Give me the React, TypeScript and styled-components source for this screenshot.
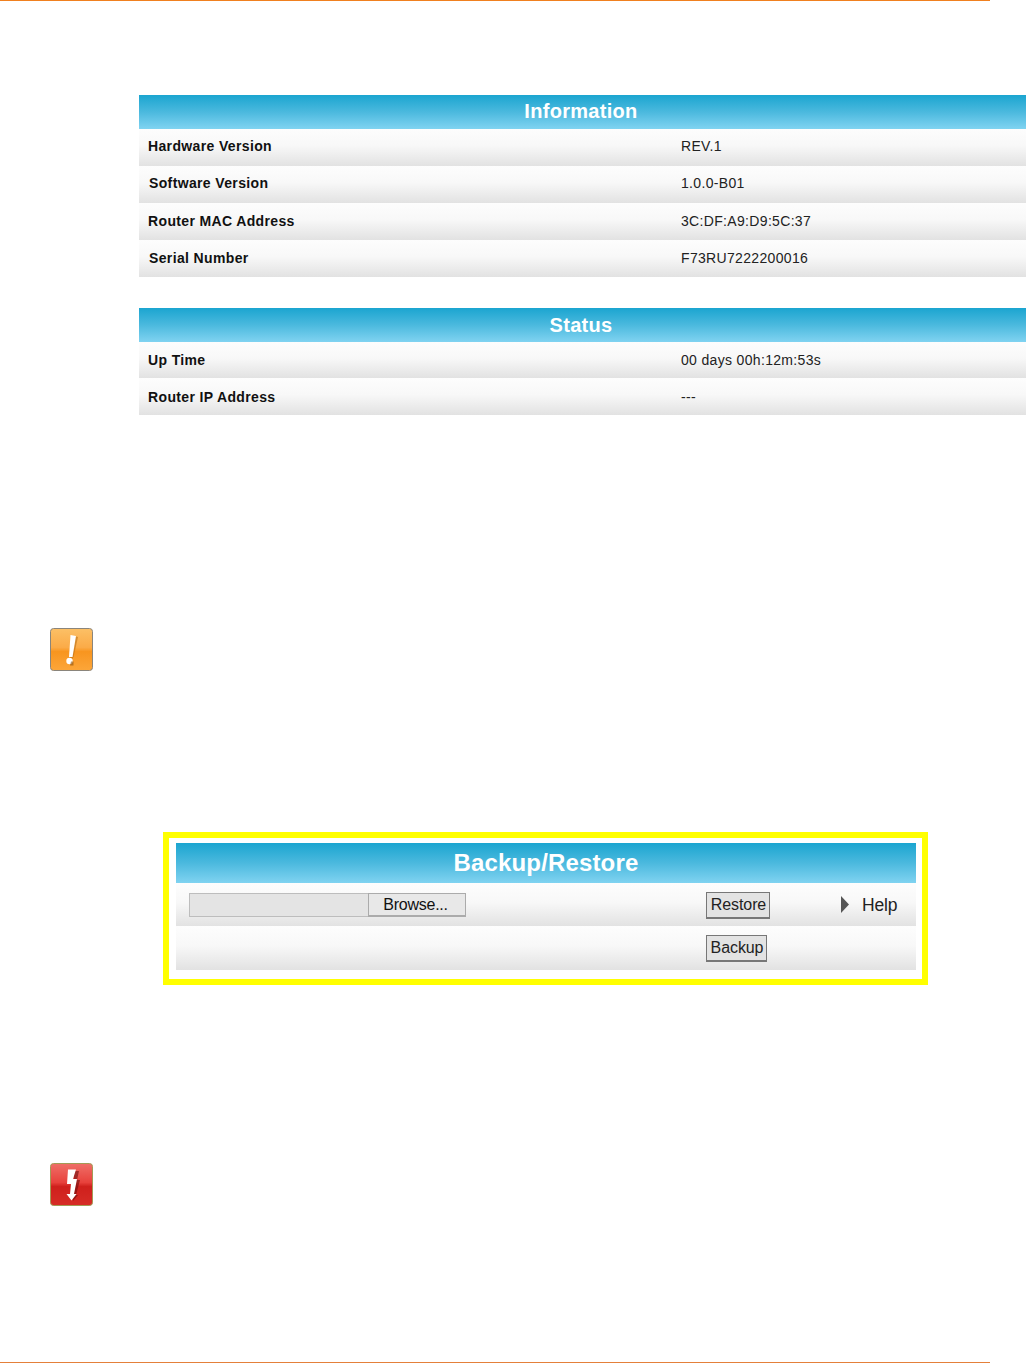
import React from "react";
import styled, { createGlobalStyle } from "styled-components";

const Global = createGlobalStyle`
  html, body { margin: 0; padding: 0; background: #fff; }
  body { font-family: "Liberation Sans", Arial, sans-serif; overflow: hidden; }
`;

const Page = styled.div`
  width: 1027px;
  height: 1363px;
  overflow: hidden;
  display: flex;
  flex-direction: column;
`;
const Rule = styled.div<{ $tone: string }>`
  width: 990px;
  height: 1px;
  background: ${(p) => p.$tone};
  flex: none;
`;
const InfoStack = styled.section`
  margin: 94px 0 0 139px;
  width: 887px;
  display: flex;
  flex-direction: column;
  gap: 31px;
`;
const Table = styled.div`
  display: flex;
  flex-direction: column;
`;
const Banner = styled.div<{ $large?: boolean; $low?: boolean }>`
  box-sizing: border-box;
  height: ${(p) => (p.$large ? 40 : 34)}px;
  line-height: ${(p) => (p.$large ? 40 : p.$low ? 34 : 32)}px;
  background: linear-gradient(180deg, #1ba5d0 0%, #4bb9de 50%, #80d3f1 100%);
  color: #fff;
  font-weight: 700;
  font-size: ${(p) => (p.$large ? 24 : 20)}px;
  letter-spacing: ${(p) => (p.$large ? 0.15 : 0.3)}px;
  text-align: center;
  padding-right: ${(p) => (p.$large ? 0 : 3)}px;
`;
const rowBg = `linear-gradient(180deg, #fdfdfd 0%, #f8f8f8 45%, #e2e2e2 100%)`;
const Row = styled.div<{ $h: number; $lift?: number }>`
  box-sizing: border-box;
  height: ${(p) => p.$h}px;
  padding-bottom: ${(p) => (p.$lift ?? 0) * 2}px;
  display: grid;
  grid-template-columns: 542px 1fr;
  align-items: center;
  background: ${rowBg};
  font-size: 14px;
  color: #111;
`;
const Label = styled.div<{ $nudge?: boolean }>`
  font-weight: 700;
  padding-left: ${(p) => (p.$nudge ? 10 : 9)}px;
  letter-spacing: 0.36px;
  color: #111;
`;
const Value = styled.div`
  color: #222;
  letter-spacing: 0.33px;
`;
const AlertIcon = styled.svg<{ $top: number }>`
  display: block;
  flex: none;
  width: 44px;
  height: 44px;
  margin: ${(p) => p.$top}px 0 0 50px;
  filter: blur(0.35px);
`;
const Frame = styled.section`
  margin: 160px 0 0 163px;
  width: 765px;
  height: 153px;
  box-sizing: border-box;
  border: 6px solid #ffff00;
  padding: 5px 6px 9px 7px;
  display: flex;
  flex-direction: column;
`;
const BackupRow = styled.div<{ $h: number }>`
  height: ${(p) => p.$h}px;
  background: ${rowBg};
  display: grid;
  grid-template-columns: 530px 135px 1fr;
  align-items: center;
  font-size: 16px;
  color: #222;
`;
const FilePicker = styled.div`
  display: flex;
  margin-left: 13px;
  height: 24px;
`;
const FileField = styled.div`
  width: 179px;
  box-sizing: border-box;
  background: #e4e4e4;
  border: 1px solid #bdbdbd;
  border-right: 0;
`;
const BrowseButton = styled.button`
  width: 98px;
  height: 24px;
  padding: 2px 3px 0 0;
  box-sizing: border-box;
  background: #e8e8e8;
  border: 1px solid #ababab;
  border-bottom-width: 2px;
  font: 16px "Liberation Sans", Arial, sans-serif;
  letter-spacing: -0.25px;
  color: #111;
  text-align: center;
`;
const ActionButton = styled.button<{ $w: number }>`
  width: ${(p) => p.$w}px;
  height: 27px;
  margin-top: 1px;
  box-sizing: border-box;
  padding: 0 0 0 1px;
  background: #e3e3e3;
  border: 1px solid #777;
  border-bottom-width: 2px;
  font: 16px "Liberation Sans", Arial, sans-serif;
  letter-spacing: -0.1px;
  color: #222;
`;
const HelpLink = styled.div`
  display: flex;
  align-items: center;
  gap: 13px;
  font-size: 17.5px;
  letter-spacing: -0.2px;
  color: #222;
`;
const HelpLabel = styled.span`
  padding-top: 2px;
`;
const HelpArrow = styled.svg`
  width: 8px;
  height: 17px;
  flex: none;
`;
const Spacer = styled.div`
  flex: 1;
`;

const Grad = ({ id, stops }: { id: string; stops: [string, string][] }) => (
  <linearGradient id={id} x1="0" y1="0" x2="0" y2="1">
    {stops.map(([o, c]) => (
      <stop key={o} offset={o} stopColor={c} />
    ))}
  </linearGradient>
);

const CautionIcon = () => (
  <AlertIcon $top={213} viewBox="0 0 44 44">
    <defs>
      <Grad id="amber" stops={[["0", "#fcc066"], ["0.45", "#fbab48"], ["0.55", "#f8951f"], ["1", "#fca63a"]]} />
    </defs>
    <rect x="0.5" y="0.5" width="42" height="42" rx="3" fill="url(#amber)" stroke="#8a857c" />
    <path d="M24 8 L28 9 L23.5 29 L21 33 L19.5 29 Z" fill="#b56a12" opacity="0.55" />
    <path d="M20.5 7 L26 8 L22.5 29 L19 29 Z" fill="#fff" />
    <circle cx="19.5" cy="33" r="3.2" fill="#fff" />
    <path d="M21 33.5 L23.5 33.5 L23.5 37.5 L20 37.5 Z" fill="#8a5210" opacity="0.6" />
  </AlertIcon>
);

const DangerIcon = () => (
  <AlertIcon $top={178} viewBox="0 0 44 44">
    <defs>
      <Grad id="crimson" stops={[["0", "#ef6f68"], ["0.45", "#e8423c"], ["0.55", "#cf201c"], ["1", "#d62c26"]]} />
    </defs>
    <rect x="0.5" y="0.5" width="42" height="42" rx="3" fill="url(#crimson)" stroke="#a39a55" />
    <path d="M24 8 L29 8 L27 17 L30 17 L26 32 L28 32 L23 38 Z" fill="#6e0d0d" opacity="0.6" />
    <path d="M18 6.5 L26 6.5 L23 16 L27 16 L24 31 L26.5 31 L21.5 37.5 L16.5 31 L20 31 L21 21 L17 21 Z" fill="#fff" />
  </AlertIcon>
);

const App = () => (
  <Page>
    <Global />
    <Rule $tone="#f0801f" />
    <InfoStack>
      <Table>
        <Banner>Information</Banner>
        <Row $h={37} $lift={2}><Label>Hardware Version</Label><Value>REV.1</Value></Row>
        <Row $h={37} $lift={2}><Label $nudge>Software Version</Label><Value>1.0.0-B01</Value></Row>
        <Row $h={37} $lift={1}><Label>Router MAC Address</Label><Value>3C:DF:A9:D9:5C:37</Value></Row>
        <Row $h={37} $lift={1}><Label $nudge>Serial Number</Label><Value>F73RU7222200016</Value></Row>
      </Table>
      <Table>
        <Banner $low>Status</Banner>
        <Row $h={36}><Label>Up Time</Label><Value>00 days 00h:12m:53s</Value></Row>
        <Row $h={37}><Label>Router IP Address</Label><Value>---</Value></Row>
      </Table>
    </InfoStack>
    <CautionIcon />
    <Frame>
      <Banner $large>Backup/Restore</Banner>
      <BackupRow $h={43}>
        <FilePicker>
          <FileField />
          <BrowseButton>Browse...</BrowseButton>
        </FilePicker>
        <ActionButton $w={64}>Restore</ActionButton>
        <HelpLink>
          <HelpArrow viewBox="0 0 8 17"><path d="M0 0 L8 8.5 L0 17 Z" fill="#555" /></HelpArrow>
          <HelpLabel>Help</HelpLabel>
        </HelpLink>
      </BackupRow>
      <BackupRow $h={44}>
        <span />
        <ActionButton $w={61}>Backup</ActionButton>
      </BackupRow>
    </Frame>
    <DangerIcon />
    <Spacer />
    <Rule $tone="#e4803a" />
  </Page>
);

export default App;
